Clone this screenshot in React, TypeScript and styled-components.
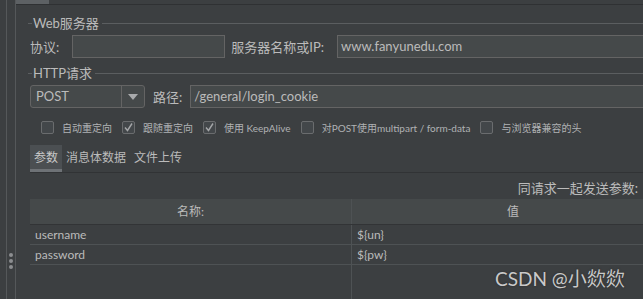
import React from "react";
import styled, { createGlobalStyle } from "styled-components";

const GlobalStyle = createGlobalStyle`
	html, body {
		margin: 0;
		padding: 0;
		background: #3c3f41;
	}
	body {
		font-family: "Lato", "Noto Sans CJK SC", sans-serif;
		color: #bbbbbb;
	}
`;

type Check = { label: string; checked: boolean };

const checks: Check[] = [
	{ label: "自动重定向", checked: false },
	{ label: "跟随重定向", checked: true },
	{ label: "使用 KeepAlive", checked: true },
	{ label: "对POST使用multipart / form-data", checked: false },
	{ label: "与浏览器兼容的头", checked: false },
];

const params = [
	{ name: "username", value: "${un}" },
	{ name: "password", value: "${pw}" },
];

const CheckMark = () => (
	<svg width='11' height='11' viewBox='0 0 11 11'>
		<path d='M2 5.5 L4.5 8.5 L9 1.5' fill='none' stroke='#a4a6a8' strokeWidth='1.4' />
	</svg>
);

const App: React.FC = () => {
	return (
		<Root>
			<GlobalStyle />
			<Splitter>
				<div className='inner' />
				<div className='dots'>
					<i />
					<i />
					<i />
				</div>
			</Splitter>
			<Main>
				<TopStrip>
					<div className='active' />
				</TopStrip>
				<Content>
					<GroupTitle>
						<span>Web服务器</span>
					</GroupTitle>
					<FormRow $top={5}>
						<Label>协议:</Label>
						<Input $width={153} $gap={13} />
						<Label $gap={6}>服务器名称或IP:</Label>
						<Input $grow $gap={13}>
							www.fanyunedu.com
						</Input>
					</FormRow>
					<GroupTitle $top={8}>
						<span>HTTP请求</span>
					</GroupTitle>
					<FormRow $top={5}>
						<Combo>
							<span className='value'>POST</span>
							<span className='arrow'>
								<svg width='10' height='6' viewBox='0 0 10 6'>
									<path d='M0 0 H10 L5 6 Z' fill='#a8aaac' />
								</svg>
							</span>
						</Combo>
						<Label $gap={8}>路径:</Label>
						<Input $grow $gap={8}>
							/general/login_cookie
						</Input>
					</FormRow>
					<CheckRow>
						{checks.map(({ label, checked }) => (
							<CheckItem key={label}>
								<Box>{checked && <CheckMark />}</Box>
								<span>{label}</span>
							</CheckItem>
						))}
					</CheckRow>
					<Tabs>
						<Tab $active>参数</Tab>
						<Tab>消息体数据</Tab>
						<Tab>文件上传</Tab>
					</Tabs>
					<SendLabel>同请求一起发送参数:</SendLabel>
					<Table>
						<HeadRow>
							<Cell $head>名称:</Cell>
							<Cell $head>值</Cell>
						</HeadRow>
						{params.map(({ name, value }) => (
							<BodyRow key={name}>
								<Cell>{name}</Cell>
								<Cell>{value}</Cell>
							</BodyRow>
						))}
						<FillRow>
							<div />
							<div />
						</FillRow>
					</Table>
				</Content>
			</Main>
			<Watermark>CSDN @小欻欻</Watermark>
		</Root>
	);
};

export default App;

const Root = styled.div`
	position: relative;
	display: flex;
	width: 643px;
	height: 299px;
	overflow: hidden;
	background: #3c3f41;
`;

const Splitter = styled.div`
	position: relative;
	width: 15px;
	flex-shrink: 0;
	border-right: 1px solid #55585a;
	> .inner {
		position: absolute;
		left: 6px;
		top: 0;
		bottom: 0;
		width: 1px;
		background: #55585a;
	}
	> .dots {
		position: absolute;
		left: 9px;
		top: 253px;
		display: flex;
		flex-direction: column;
		gap: 2px;
		> i {
			display: block;
			width: 4px;
			height: 4px;
			border-radius: 50%;
			background: #8c8e90;
		}
	}
`;

const Main = styled.div`
	flex: 1;
	display: flex;
	flex-direction: column;
	min-width: 0;
`;

const TopStrip = styled.div`
	height: 4px;
	border-bottom: 1px solid #2f3133;
	> .active {
		width: 33px;
		height: 4px;
		background: #5d6164;
	}
`;

const Content = styled.div`
	padding: 0 0 0 12px;
	display: flex;
	flex-direction: column;
	width: 700px;
`;

const GroupTitle = styled.div<{ $top?: number }>`
	display: flex;
	align-items: center;
	height: 14px;
	margin-top: ${(p) => p.$top ?? 11}px;
	font-size: 13px;
	color: #bbbbbb;
	&::before {
		content: "";
		width: 4px;
		height: 1px;
		background: #5b5e60;
		margin-right: 1px;
	}
	&::after {
		content: "";
		flex: 1;
		height: 1px;
		background: #5b5e60;
		margin-left: 3px;
	}
	> span {
		line-height: 14px;
	}
`;

const FormRow = styled.div<{ $top?: number }>`
	display: flex;
	align-items: center;
	height: 23px;
	margin-top: ${(p) => p.$top ?? 0}px;
	padding-left: 2px;
`;

const Label = styled.span<{ $gap?: number }>`
	font-size: 13px;
	color: #bbbbbb;
	margin-left: ${(p) => p.$gap ?? 0}px;
	white-space: nowrap;
`;

const Input = styled.div<{ $width?: number; $grow?: boolean; $gap?: number }>`
	box-sizing: border-box;
	height: 23px;
	width: ${(p) => (p.$width ? `${p.$width}px` : "auto")};
	flex: ${(p) => (p.$grow ? 1 : "none")};
	margin-left: ${(p) => p.$gap ?? 14}px;
	background: #45494a;
	border: 1px solid #646464;
	padding: 0 3px;
	font-size: 13px;
	line-height: 21px;
	color: #bbbbbb;
	white-space: nowrap;
`;

const Combo = styled.div`
	box-sizing: border-box;
	display: flex;
	width: 115px;
	height: 23px;
	background: #45494a;
	border: 1px solid #646464;
	border-radius: 3px;
	> .value {
		flex: 1;
		padding-left: 5px;
		font-size: 13px;
		line-height: 21px;
	}
	> .arrow {
		width: 22px;
		border-left: 1px solid #646464;
		display: flex;
		align-items: center;
		justify-content: center;
	}
`;

const CheckRow = styled.div`
	display: flex;
	align-items: center;
	height: 14px;
	margin-top: 12px;
	padding-left: 13px;
	gap: 10px;
`;

const CheckItem = styled.div`
	display: flex;
	align-items: center;
	gap: 8px;
	font-size: 10px;
	color: #b0b2b4;
	white-space: nowrap;
`;

const Box = styled.div`
	box-sizing: border-box;
	width: 13px;
	height: 13px;
	border: 1px solid #6a6c6e;
	border-radius: 2px;
	background: #43474a;
	display: flex;
	align-items: center;
	justify-content: center;
`;

const Tabs = styled.div`
	display: flex;
	height: 27px;
	margin-top: 11px;
	margin-left: 2px;
	border-bottom: 1px solid #313335;
`;

const Tab = styled.div<{ $active?: boolean }>`
	box-sizing: border-box;
	padding: 0 4px;
	height: 27px;
	font-size: 12px;
	line-height: 25px;
	color: ${(p) => (p.$active ? "#c8c8c8" : "#bbbbbb")};
	background: ${(p) => (p.$active ? "#4b4f52" : "transparent")};
	border-bottom: 3px solid ${(p) => (p.$active ? "#6e7276" : "transparent")};
`;

const SendLabel = styled.div`
	width: 610px;
	margin-top: 7px;
	text-align: right;
	font-size: 13px;
	line-height: 16px;
	color: #bbbbbb;
`;

const Table = styled.div`
	margin-top: 3px;
	margin-left: 2px;
	display: flex;
	flex-direction: column;
`;

const HeadRow = styled.div`
	display: grid;
	grid-template-columns: 322px 1fr;
	height: 25px;
	background: #45494a;
	border-bottom: 1px solid #323436;
`;

const BodyRow = styled.div`
	display: grid;
	grid-template-columns: 322px 1fr;
	height: 19px;
	border-bottom: 1px solid #4e5254;
`;

const FillRow = styled.div`
	display: grid;
	grid-template-columns: 322px 1fr;
	height: 60px;
	> div:first-child {
		border-right: 1px solid #4e5254;
	}
`;

const Cell = styled.div<{ $head?: boolean }>`
	font-size: 12px;
	line-height: ${(p) => (p.$head ? "25px" : "19px")};
	text-align: ${(p) => (p.$head ? "center" : "left")};
	padding-left: ${(p) => (p.$head ? 0 : 5)}px;
	color: #bbbbbb;
	border-right: 1px solid #4e5254;
	white-space: nowrap;
	&:last-child {
		width: 322px;
	}
`;

const Watermark = styled.div`
	position: absolute;
	left: 495px;
	top: 264px;
	font-family: "Lato", "Noto Sans CJK SC", sans-serif;
	font-size: 19px;
	color: #c9c9c9;
	text-shadow: 0 0 2px #2a2a2a;
	white-space: nowrap;
`;
